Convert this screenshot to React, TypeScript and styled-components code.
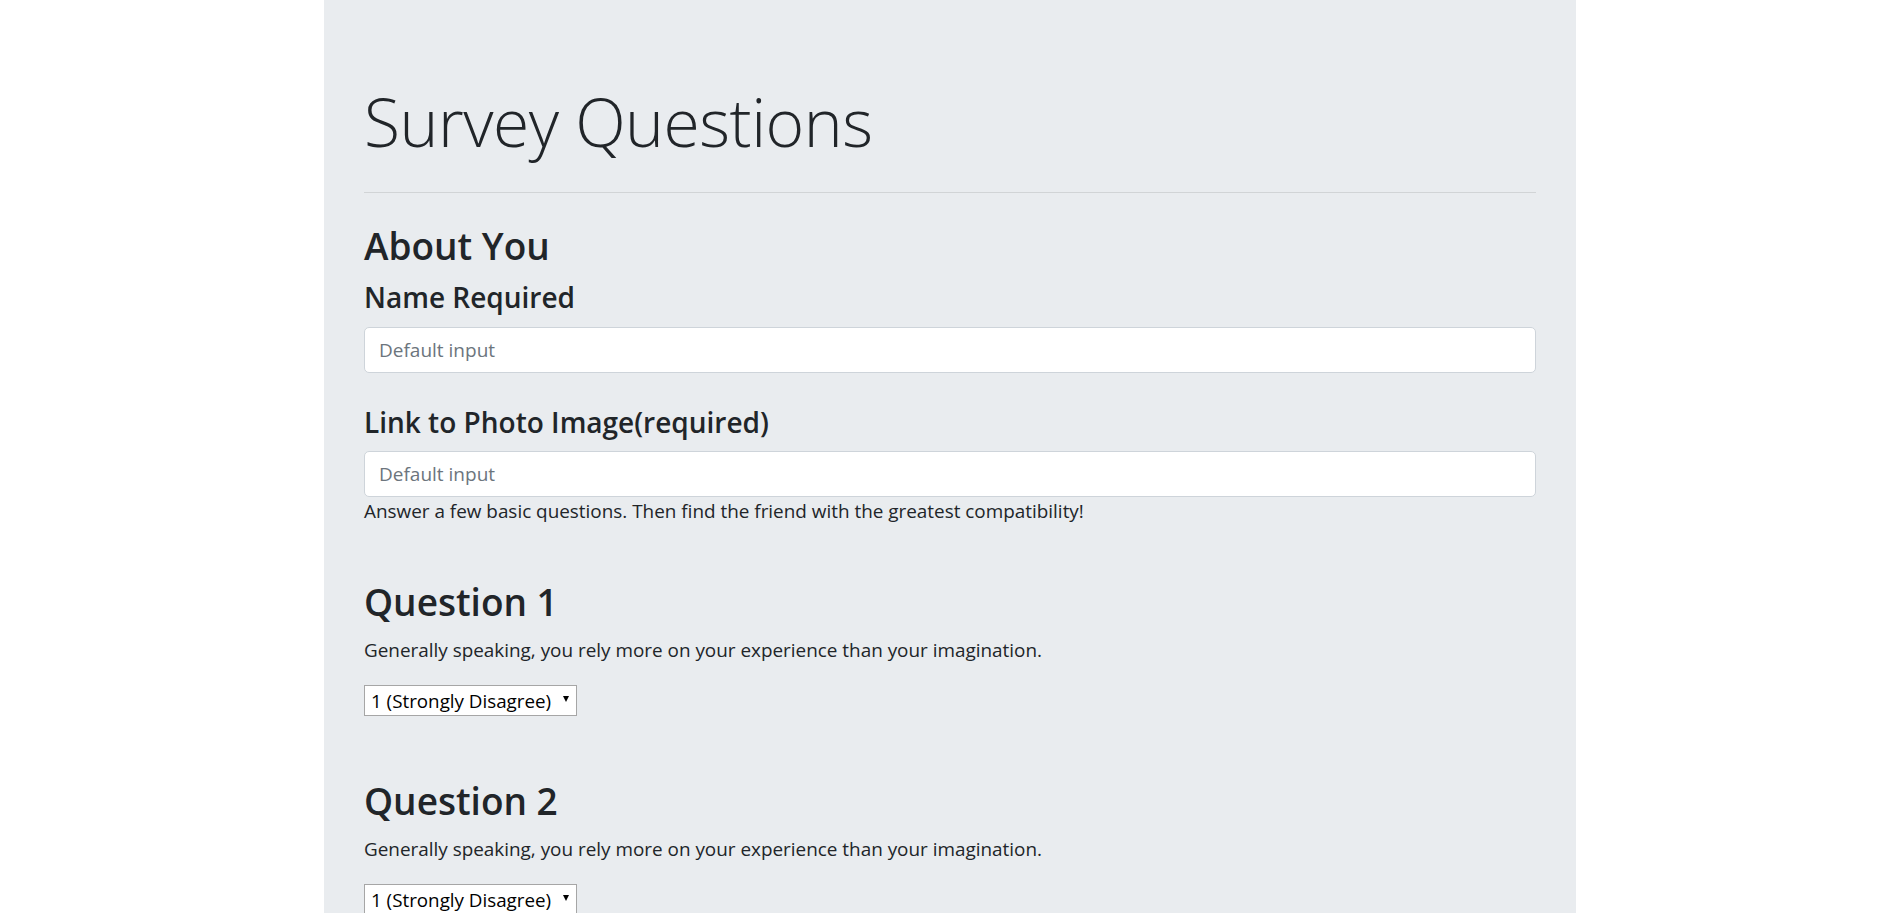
import React from "react";
import styled, { createGlobalStyle } from "styled-components";

const GlobalStyle = createGlobalStyle`
  html, body {
    margin: 0;
    padding: 0;
    background: #ffffff;
  }
  body {
    font-family: "Open Sans", "Noto Sans", "Liberation Sans", sans-serif;
    color: #212529;
  }
  * {
    box-sizing: border-box;
  }
`;

const questions = [
  {
    id: 1,
    text: "Generally speaking, you rely more on your experience than your imagination.",
  },
  {
    id: 2,
    text: "Generally speaking, you rely more on your experience than your imagination.",
  },
];

const answers = [
  "1 (Strongly Disagree)",
  "2",
  "3",
  "4",
  "5 (Strongly Agree)",
];

export default function App() {
  return (
    <>
      <GlobalStyle />
      <Page>
        <Jumbotron>
          <Title>Survey Questions</Title>
          <Divider />
          <SectionTitle>About You</SectionTitle>
          <FieldLabel>Name Required</FieldLabel>
          <TextInput type="text" placeholder="Default input" />
          <FieldLabel $spaced>Link to Photo Image(required)</FieldLabel>
          <TextInput type="text" placeholder="Default input" />
          <HelpText>
            Answer a few basic questions. Then find the friend with the greatest
            compatibility!
          </HelpText>

          <QuestionList>
            {questions.map((q) => (
              <Question key={q.id}>
                <SectionTitle>Question {q.id}</SectionTitle>
                <QuestionText>{q.text}</QuestionText>
                <SelectWrap>
                  <AnswerSelect defaultValue={answers[0]}>
                    {answers.map((a) => (
                      <option key={a} value={a}>
                        {a}
                      </option>
                    ))}
                  </AnswerSelect>
                  <Caret />
                </SelectWrap>
              </Question>
            ))}
          </QuestionList>
        </Jumbotron>
      </Page>
    </>
  );
}

const Page = styled.div`
  display: flex;
  justify-content: center;
  padding-left: 7px;
  min-height: 100vh;
`;

const Jumbotron = styled.main`
  width: 1252px;
  min-height: 100vh;
  background: #e9ecef;
  padding: 79px 40px 64px;
  display: flex;
  flex-direction: column;
  align-items: stretch;
`;

const Title = styled.h1`
  margin: 0;
  font-size: 66px;
  font-weight: 300;
  line-height: 84px;
  letter-spacing: -0.5px;
`;

const Divider = styled.hr`
  margin: 29px 0 0;
  border: 0;
  height: 1px;
  background: rgba(0, 0, 0, 0.1);
`;

const SectionTitle = styled.h2`
  margin: 29px 0 0;
  font-size: 37px;
  font-weight: 600;
  line-height: 48px;
`;

const FieldLabel = styled.h4<{ $spaced?: boolean }>`
  margin: ${({ $spaced }) => ($spaced ? "31px" : "9px")} 0 0;
  font-size: 28px;
  font-weight: 600;
  line-height: 36px;
`;

const TextInput = styled.input`
  display: block;
  width: 100%;
  height: 46px;
  margin-top: 11.5px;
  padding: 0 14px;
  font-family: inherit;
  font-size: 19px;
  color: #495057;
  background: #ffffff;
  border: 1px solid #ced4da;
  border-radius: 5px;
  outline: none;

  &::placeholder {
    color: #6c757d;
  }
`;

const HelpText = styled.p`
  margin: 1px 0 0;
  font-size: 18.9px;
  line-height: 27px;
`;

const QuestionList = styled.div`
  display: flex;
  flex-direction: column;
  gap: 61px;
  margin-top: 53px;
`;

const Question = styled.section`
  display: flex;
  flex-direction: column;
  align-items: flex-start;

  ${SectionTitle} {
    margin: 0;
  }
`;

const QuestionText = styled.p`
  margin: 10.5px 0 0;
  font-size: 18.9px;
  line-height: 27px;
`;

const SelectWrap = styled.div`
  position: relative;
  margin-top: 21.5px;
  width: 213px;
  height: 31px;
`;

const AnswerSelect = styled.select`
  appearance: none;
  width: 100%;
  height: 100%;
  padding: 0 20px 0 6px;
  font-family: inherit;
  font-size: 18.8px;
  color: #000000;
  background: #ffffff;
  border: 1px solid #a6a6a6;
  border-radius: 0;
  outline: none;
`;

const Caret = styled.span`
  position: absolute;
  right: 8px;
  top: 11px;
  width: 0;
  height: 0;
  border-left: 3.5px solid transparent;
  border-right: 3.5px solid transparent;
  border-top: 6px solid #000000;
  pointer-events: none;
`;
